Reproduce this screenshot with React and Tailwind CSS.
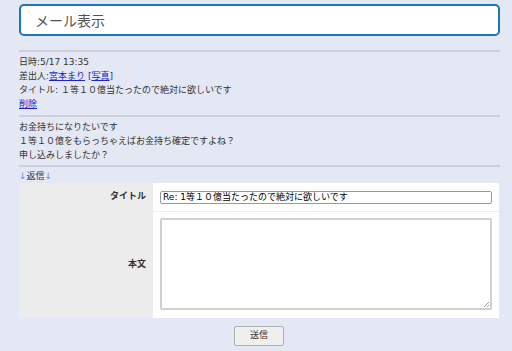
export default function App() {
  const font = { fontFamily: '"DejaVu Sans", "Noto Sans CJK JP", sans-serif' };
  return (
    <div className="h-[351px] w-full overflow-hidden bg-[#e4e8f4] text-[#333]" style={font}>
      <div className="ml-[19px] w-[481px] pt-[4px]">
        <div
          className="flex h-[32px] items-center rounded-[5px] border-2 border-[#1c74b9] bg-white pl-[14px] text-[14px] text-[#555]"
          style={{ fontFamily: '"Noto Sans CJK JP", sans-serif' }}
        >
          メール表示
        </div>

        <div className="mt-[14px] h-[2px] bg-[#cdd0da]" />
        <div className="pt-[3px] pb-[4px] text-[9px] leading-[14px]">
          <div>日時:5/17 13:35</div>
          <div>
            差出人:<a className="text-[#2222cc] underline">宮本まり</a>{" "}
            <span className="text-[#2222cc]">[<a className="underline">写真</a>]</span>
          </div>
          <div>タイトル: １等１０億当たったので絶対に欲しいです</div>
          <div>
            <a className="text-[#2222cc] underline">削除</a>
          </div>
        </div>

        <div className="h-[2px] bg-[#cdd0da]" />
        <div className="pt-[3px] pb-[3px] text-[9px] leading-[14px]">
          <div>お金持ちになりたいです</div>
          <div>１等１０億をもらっちゃえばお金持ち確定ですよね？</div>
          <div>申し込みしましたか？</div>
        </div>

        <div className="h-[2px] bg-[#cdd0da]" />
        <div className="pt-[2px] text-[9px] leading-[14px]">
          <span className="text-[#6a8fc8]">↓</span>返信<span className="text-[#6a8fc8]">↓</span>
        </div>

        <div className="w-[480px] bg-white">
          <div className="flex h-[29px] border-b border-[#ececec]">
            <div className="flex w-[134px] items-center justify-end bg-[#ececec] pr-[7px] text-[9px] font-bold">
              タイトル
            </div>
            <div className="flex flex-1 items-center pl-[7px] pr-[7px]">
              <div className="flex h-[13px] w-full items-center rounded-[2px] border border-[#999] bg-white pl-[2px] text-[9px] leading-none text-black">
                Re: 1等１０億当たったので絶対に欲しいです
              </div>
            </div>
          </div>
          <div className="flex h-[106px]">
            <div className="flex w-[134px] items-center justify-end bg-[#ececec] pr-[7px] text-[9px] font-bold">
              本文
            </div>
            <div className="flex-1 px-[7px] pt-[6px]">
              <div className="relative h-[92px] w-full rounded-[2px] border-2 border-[#d0d0d0] bg-white">
                <svg className="absolute bottom-0 right-0" width="7" height="7" viewBox="0 0 7 7">
                  <path d="M6 1L1 6M6 4L4 6" stroke="#999" strokeWidth="1" />
                </svg>
              </div>
            </div>
          </div>
        </div>

        <div className="mt-[8px] flex w-[480px] justify-center">
          <button className="h-[20px] w-[50px] rounded-[2px] border border-[#b0b0b0] bg-[#efefef] text-[9px] text-[#333]">
            送信
          </button>
        </div>
      </div>
    </div>
  );
}
